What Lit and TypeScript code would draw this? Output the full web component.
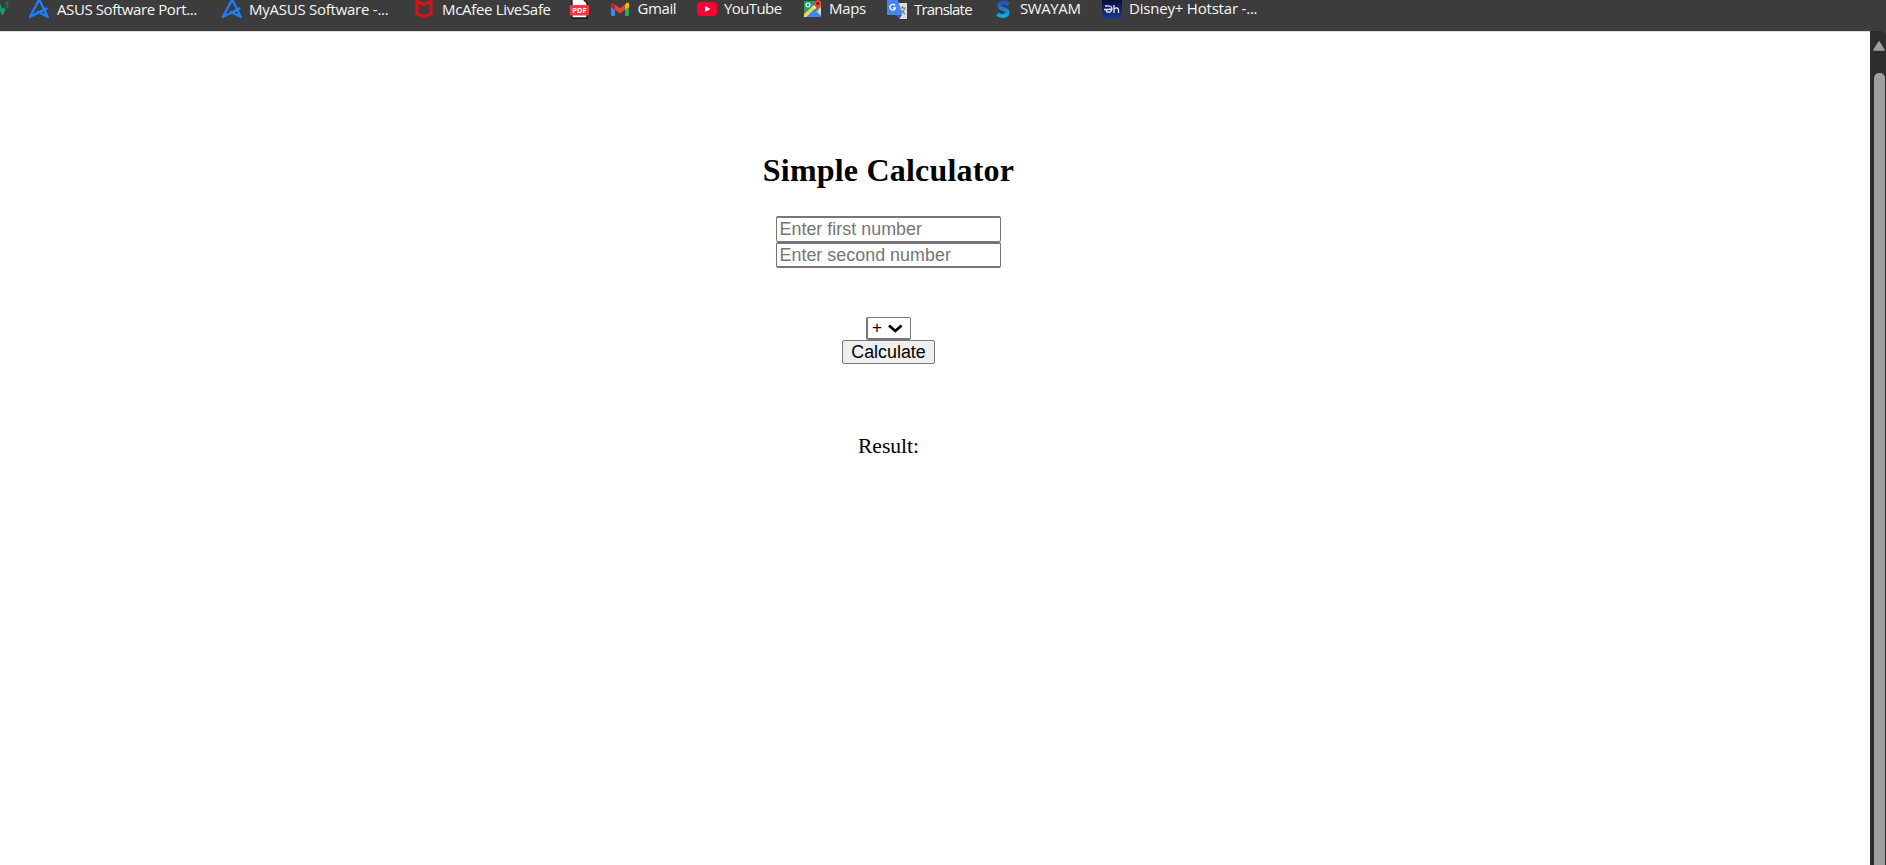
import { LitElement, html, css, svg } from "lit";
import { customElement, property } from "lit/decorators.js";

const asus = svg`<path d="M10.2 -.5L.8 17L17.5 8.5M10.2 -.5L18.8 17L9 11.8" fill="none" stroke="#1a80ff" stroke-width="2.3" stroke-linejoin="round" stroke-linecap="round"/>`;

const bookmarks = [
  { w: 29, icon: svg`<path d="M-3 2L1.5 14.5L3.5 14.5L5.5 9L3.2 7.5L2 9L-.5 2Z" fill="#0ba36d"/><path d="M5.5 2.5H8L6.5 4.5Q9 5 8 7Q6.5 8 5.5 7" fill="none" stroke="#0b8f62"/>`, text: "", tx: 0, ls: 0, up: false },
  { w: 193, icon: asus, text: "ASUS Software Port...", tx: 28, ls: -0.4, up: false },
  { w: 193, icon: asus, text: "MyASUS Software -...", tx: 27, ls: -0.25, up: false },
  { w: 155, icon: svg`<path d="M2 1L9 5L16 1V13.5L9 17L2 13.5Z" fill="#3c3c3c" stroke="#c9151b" stroke-width="3.4"/>`, text: "McAfee LiveSafe", tx: 27, ls: -0.32, up: false },
  { w: 41, icon: svg`<path d="M2 -1H13L17 3V18H2Z" fill="#fff" stroke="#171717" stroke-width="1.3"/><rect y="5" width="19" height="10.5" rx="1" fill="#fa3440"/><text x="9.5" y="13" text-anchor="middle" class="pdf">PDF</text>`, text: "", tx: 0, ls: 0, up: false },
  { w: 86, icon: svg`<path d="M0 4L4 6V16H1.5Q0 16 0 14.5Z" fill="#4285f4"/><path d="M14 6L18 4V14.5Q18 16 16.5 16H14Z" fill="#34a853"/><path d="M14 4.5Q18 .5 18 5V7L14 10Z" fill="#fbbc04"/><path d="M4 4.5L9 8.2L14 4.5V9.8L9 13.6L4 9.8Z" fill="#ea4335"/><path d="M0 5Q0 .5 4 4.5V10L0 7Z" fill="#c5221f"/>`, text: "Gmail", tx: 26.5, ls: -0.4, up: true },
  { w: 107, icon: svg`<rect y="2" width="20" height="14" rx="3.5" fill="#ff0033"/><path d="M8 6L13.5 9L8 12Z" fill="#fff"/>`, text: "YouTube", tx: 27, ls: -0.6, up: true },
  { w: 83, icon: svg`<rect y="1" width="17" height="16" rx="1" fill="#1da463"/><path d="M1 17L9 9L17 17Z" fill="#4285f4"/><path d="M0 15L13 2L17 6L9 10L2 17H0Z" fill="#e8e8e8"/><path d="M0 14L9 6L10 9L2 17L0 16Z" fill="#fcd14a"/><path d="M12 11L17 16V7Z" fill="#d4d4d4"/><circle cx="4" cy="5" r="2" fill="none" stroke="#fff" stroke-width="1.2"/><path d="M13.5 12Q13.3 8 10.5 5.5Q8.8 1 13.5 0Q18.5 1 17 5.5Q13.8 8 13.5 12" fill="#ea4335"/><circle cx="13.7" cy="3.6" r="1.5" fill="#811411"/>`, text: "Maps", tx: 25, ls: -0.35, up: true },
  { w: 109, icon: svg`<path d="M9 3H20V19H13L10 15Z" fill="#dcdcdc"/><path d="M0 0H11L15 15H0Z" fill="#4285f4"/><path d="M9 15H15L12 19Z" fill="#2d59c8"/><path d="M8 5.5A2.8 2.8 0 1 0 8.5 8H6" fill="none" stroke="#fff" stroke-width="1.3"/><path d="M12.5 8H18.5M15.5 6V8M17.5 8Q17 12 13 14M13.5 10L18 14" fill="none" stroke="#607d8b" stroke-width="1.1"/>`, text: "Translate", tx: 27, ls: -0.8, up: false },
  { w: 106, icon: svg`<defs><linearGradient id="s" x1="0" y1="0" x2="0" y2="1"><stop stop-color="#2452b8"/><stop offset="1" stop-color="#02b3ed"/></linearGradient></defs><path d="M12.5 4.2Q10.5 2.3 7 2.6Q3 3 3.3 6Q3.8 8 7.5 9Q12 10.2 11.5 13Q10.5 16 6.5 16Q3.5 16 1.5 13.8" fill="none" stroke="url(#s)" stroke-width="4"/>`, text: "SWAYAM", tx: 24, ls: -0.4, up: true },
  { w: 160, icon: svg`<defs><linearGradient id="h" x1="0" y1="0" x2="0" y2="1"><stop stop-color="#080b3b"/><stop offset="1" stop-color="#183d8c"/></linearGradient></defs><rect y="-1" width="20" height="20" fill="url(#h)"/><path d="M3 6Q10 5 10 9Q9 13 5 12Q3 9.5 9 9M2 9.5H6M12 5V13M12 9Q16 6.5 16.5 10V13" fill="none" stroke="#e8eaff" stroke-width="1.3"/>`, text: "Disney+ Hotstar -...", tx: 27, ls: -0.2, up: true },
];

@customElement("bookmark-item")
class BookmarkItem extends LitElement {
  @property({ attribute: false }) item: any;
  static styles = css`
    :host { display: block; flex: none; }
    .item { display: grid; height: 31px; align-items: start; }
    svg { grid-area: 1/1; display: block; width: 20px; height: 20px; overflow: visible; }
    .label { grid-area: 1/1; padding-top: 1px; color: #f7f7f7; font: 15px/17px "Open Sans", "Noto Sans", sans-serif; white-space: nowrap; }
    .up { padding-top: 0; }
    .pdf { font: bold 7.5px "Open Sans", sans-serif; fill: #fff; }
  `;
  render() {
    const b = this.item;
    return html`<div class="item" style="width:${b.w}px">
      <svg viewBox="0 0 20 20">${b.icon}</svg>
      <span class="label ${b.up ? "up" : ""}" style="padding-left:${b.tx}px;letter-spacing:${b.ls}px">${b.text}</span>
    </div>`;
  }
}

@customElement("app-root")
class AppRoot extends LitElement {
  static styles = css`
    :host { display: flex; flex-direction: column; height: 865px; overflow: hidden; background: #fff; color: #000; }
    .bar { display: flex; height: 31px; background: #3c3c3c; flex: none; overflow: hidden; }
    .body { display: flex; flex: 1; min-height: 0; background: #3c3c3c; }
    .page { box-sizing: border-box; flex: 1; display: flex; flex-direction: column; align-items: center; padding: 120px 93px 0 0; border-top: 1px solid #ddd; background: #fff; font: 21.6px/24px "Liberation Serif", serif; }
    h2 { margin: 0 0 28px; font-size: 32px; line-height: 36px; letter-spacing: 0.2px; }
    input { box-sizing: border-box; width: 225px; height: 26px; margin: 0; padding: 1px 3px 1px 2.5px; border: 1px solid #767676; border-width: 2px 1px 1px; border-radius: 2px; font: 17.85px/20px "Liberation Sans", sans-serif; background: #fff; }
    input + input { border-bottom-width: 2px; }
    input::placeholder { color: #757575; letter-spacing: 0.04px; }
    .op { display: grid; margin-top: 49px; }
    select { grid-area: 1/1; appearance: none; box-sizing: border-box; width: 45px; height: 23px; margin: 0; padding: 0 0 0 4px; border: 1px solid #767676; border-width: 1px 1px 2px 2px; border-radius: 2px; background: #fff; color: #000; font: 17px/20px "Liberation Sans", sans-serif; }
    .chev { grid-area: 1/1; justify-self: end; align-self: center; width: 15px; height: 9px; margin-right: 8px; pointer-events: none; }
    button { box-sizing: border-box; width: 93px; height: 24px; margin: 0; padding: 0; border: 1px solid #767676; border-radius: 2px; background: #efefef; color: #000; font: 17.85px/20px "Liberation Sans", sans-serif; }
    .result { margin-top: 70px; }
    .scroll { width: 16px; box-sizing: border-box; flex: none; display: flex; flex-direction: column; align-items: flex-end; background: #2c2c2c; padding-right: 1px; border-top-right-radius: 6px; }
    .scroll svg { width: 12px; height: 10px; margin: 10px 0 22px; flex: none; }
    .thumb { width: 11px; flex: 1; border-radius: 5px 5px 0 0; background: #9f9f9f; }
  `;
  render() {
    return html`
      <div class="bar">${bookmarks.map((b) => html`<bookmark-item .item=${b}></bookmark-item>`)}</div>
      <div class="body">
        <main class="page">
          <h2>Simple Calculator</h2>
          <input placeholder="Enter first number" />
          <input placeholder="Enter second number" />
          <div class="op">
            <select><option>+</option></select>
            <svg class="chev" viewBox="0 0 15 9"><path d="M1 1.5L7.3 7L13.6 1.5" fill="none" stroke="#000" stroke-width="2.8"/></svg>
          </div>
          <button>Calculate</button>
          <div class="result">Result:</div>
        </main>
        <div class="scroll">
          <svg viewBox="0 0 12 10"><path d="M6 1L11 9H1Z" fill="#9f9f9f" stroke="#9f9f9f" stroke-width="1.5" stroke-linejoin="round"/></svg>
          <div class="thumb"></div>
        </div>
      </div>`;
  }
}
